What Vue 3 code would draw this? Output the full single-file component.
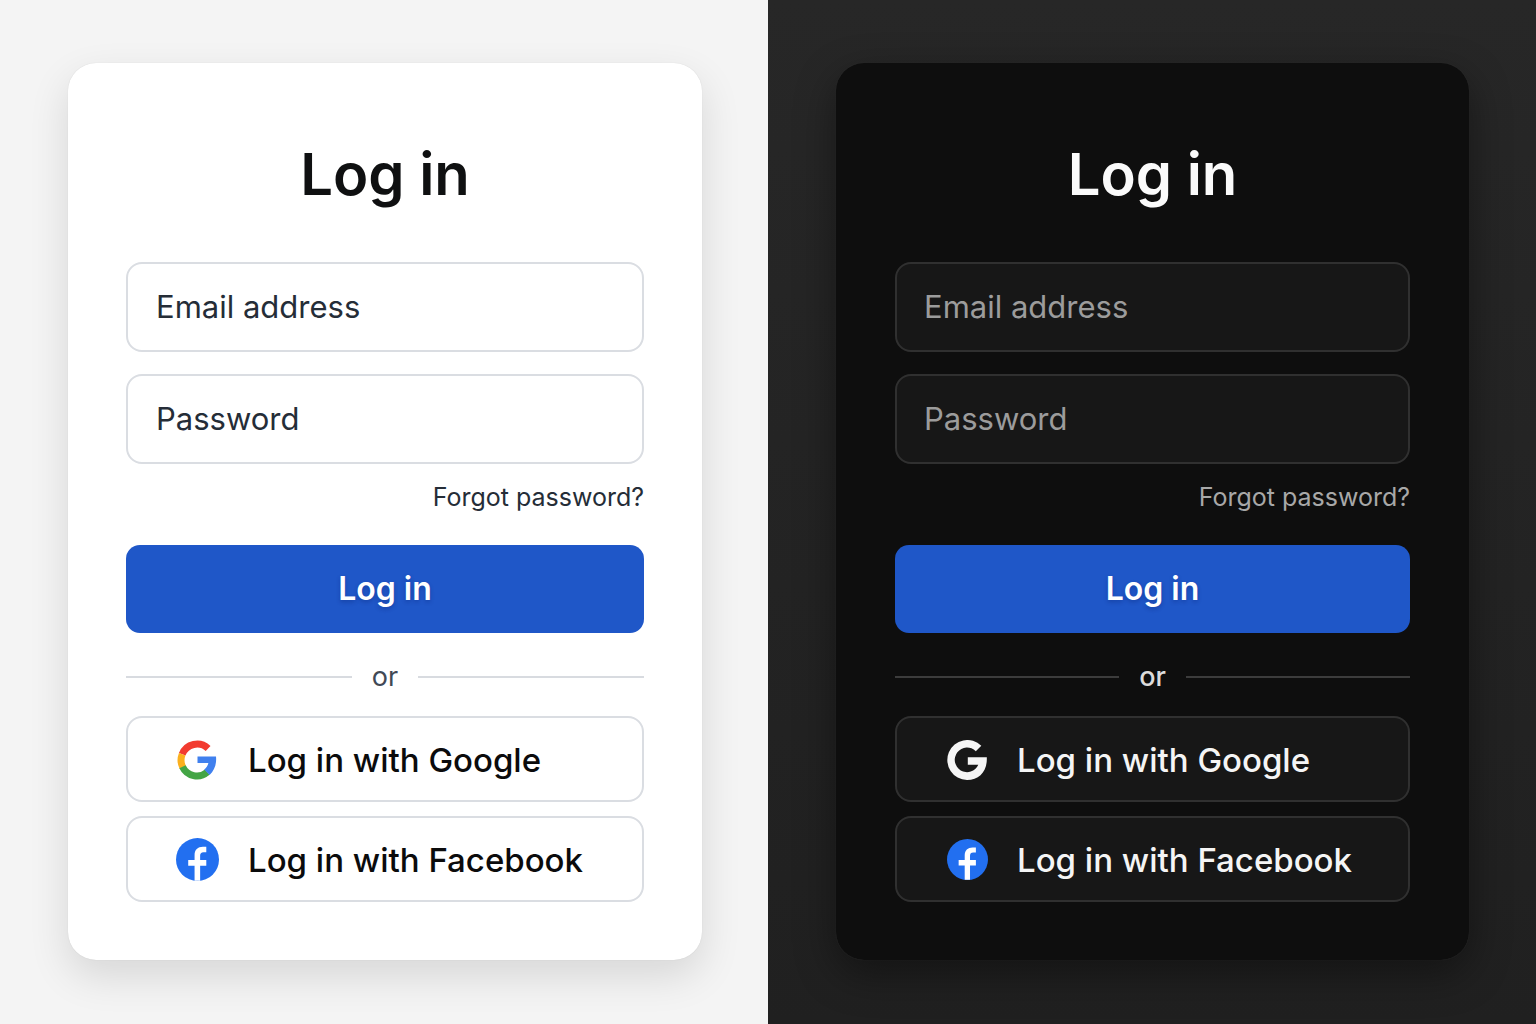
<script setup>
const panels = [
  { id: 'light' },
  { id: 'dark' },
]
</script>

<template>
  <main class="page">
    <section v-for="p in panels" :key="p.id" class="panel" :class="p.id">
      <form class="card" @submit.prevent>
        <h1 class="title">Log in</h1>
        <div class="fields">
          <input class="field" type="email" placeholder="Email address" aria-label="Email address" />
          <input class="field" type="password" placeholder="Password" aria-label="Password" />
        </div>
        <a class="forgot" href="#">Forgot password?</a>
        <button class="submit" type="submit">Log in</button>
        <div class="divider"><span>or</span></div>
        <div class="socials">
          <button class="social" type="button">
            <span class="icon">
              <svg v-if="p.id === 'light'" width="40" height="40" viewBox="0 0 40 40" aria-hidden="true">
                <g fill="none" stroke-width="7">
                  <path stroke="#f23b30" d="M5.200 14.300A16 16 0 0 1 31.100 8.500" />
                  <path stroke="#fbb01e" d="M5.700 27.200A16 16 0 0 1 5.200 14.300" />
                  <path stroke="#43a545" d="M30.300 32.200A16 16 0 0 1 5.500 26.800" />
                </g>
                <path fill="#4080ee" d="M20.500 16.500H39c.8 7.500-1.500 13.800-6.400 18.400l-5.400-5.300c2-1.500 3.500-3.600 4.200-6.600H20.500z" />
              </svg>
              <svg v-else width="40" height="40" viewBox="0 0 40 40" aria-hidden="true">
                <path fill="#f5f5f5" d="M34.300 5.700 28.800 11.200A12.300 12.300 0 1 0 31.300 24.800H20.800V17.300H39.800C40.500 31 32.500 40 20 40A20 20 0 1 1 34.300 5.700z" />
              </svg>
            </span>
            Log in with Google
          </button>
          <button class="social" type="button">
            <span class="icon">
              <svg class="facebook" viewBox="0 0 44 44" aria-hidden="true">
                <circle cx="22" cy="22" r="22" fill="#226ff0" />
                <path fill="#fff" d="M19 43.800V28.500h-6.500v-6H19v-4.800c0-5.800 3.400-8.700 8.500-8.700H31v5.500h-2.800c-2.500 0-3.500 1.300-3.500 3.500v4.500H31v6h-6.300v15.300z" />
              </svg>
            </span>
            Log in with Facebook
          </button>
        </div>
      </form>
    </section>
  </main>
</template>

<style>
body {
  margin: 0;
}
</style>

<style scoped>
.page {
  display: grid;
  grid-template-columns: 1fr 1fr;
  min-height: 100vh;
  font-family: Inter, sans-serif;
}
.panel {
  --bg: #f4f4f4;
  --card: #fff;
  --title: #0f1011;
  --field: #fff;
  --line: #dadde2;
  --rule: #d8dbe0;
  --hint: #252d37;
  --link: #252d37;
  --or: #414955;
  --text: #0b0b0c;
  box-sizing: border-box;
  padding: 63px 66px 64px 68px;
  background: var(--bg);
}
.dark {
  --bg: linear-gradient(#272727, #202020);
  --card: #0e0e0e;
  --title: #fafafa;
  --field: #171717;
  --line: #303030;
  --rule: #3c3c3c;
  --hint: #9c9c9c;
  --link: #a8a8a8;
  --or: #dcdcdc;
  --text: #f5f5f5;
  padding-right: 67px;
}
.card {
  box-sizing: border-box;
  display: flex;
  flex-direction: column;
  height: 100%;
  padding: 75px 58px 58px;
  border-radius: 28px;
  background: var(--card);
  box-shadow: 0 0 1px rgba(0, 0, 0, 0.15), 0 16px 40px rgba(0, 0, 0, 0.12);
}
.dark .card {
  padding: 75px 59px 58px;
  box-shadow: 0 0 1px #3a3a3a, 0 14px 40px rgba(0, 0, 0, 0.4);
}
.title {
  margin: 0 0 52px;
  font-size: 58px;
  line-height: 72px;
  font-weight: 600;
  text-align: center;
  color: var(--title);
}
.fields {
  display: grid;
  gap: 22px;
  margin-bottom: 17px;
}
.field {
  box-sizing: border-box;
  width: 100%;
  height: 90px;
  margin: 0;
  padding: 0 28px 2px;
  border: 2px solid var(--line);
  border-radius: 16px;
  background: var(--field);
  color: var(--hint);
  font: 400 31px/40px Inter, sans-serif;
}
.dark .field {
  padding-left: 27px;
}
.field::placeholder {
  color: var(--hint);
  opacity: 1;
}
.forgot {
  align-self: flex-end;
  margin-bottom: 32px;
  font-size: 25px;
  line-height: 32px;
  color: var(--link);
  text-decoration: none;
}
.submit {
  height: 88px;
  border: 0;
  border-radius: 14px;
  background: #1f57c8;
  color: #fff;
  font: 600 32px/40px Inter, sans-serif;
  text-shadow: 0 2px 4px rgba(0, 20, 90, 0.3);
}
.divider {
  display: flex;
  align-items: center;
  gap: 20px;
  margin: 28px 0 23px;
  font-size: 27px;
  line-height: 32px;
  color: var(--or);
}
.dark .divider {
  font-weight: 500;
}
.divider::before,
.divider::after {
  content: '';
  flex: 1;
  height: 2px;
  background: var(--rule);
}
.socials {
  display: grid;
  gap: 14px;
}
.social {
  display: flex;
  align-items: center;
  gap: 29px;
  height: 86px;
  padding: 1px 0 0 47px;
  border: 2px solid var(--line);
  border-radius: 16px;
  background: var(--field);
  color: var(--text);
  font: 500 33px/40px Inter, sans-serif;
  white-space: nowrap;
}
.dark .social {
  padding-left: 48px;
  gap: 28px;
}
.icon {
  display: flex;
  justify-content: center;
  width: 44px;
}
.facebook {
  width: 43px;
  height: 43px;
}
.dark .facebook {
  width: 41px;
  height: 41px;
}
</style>
